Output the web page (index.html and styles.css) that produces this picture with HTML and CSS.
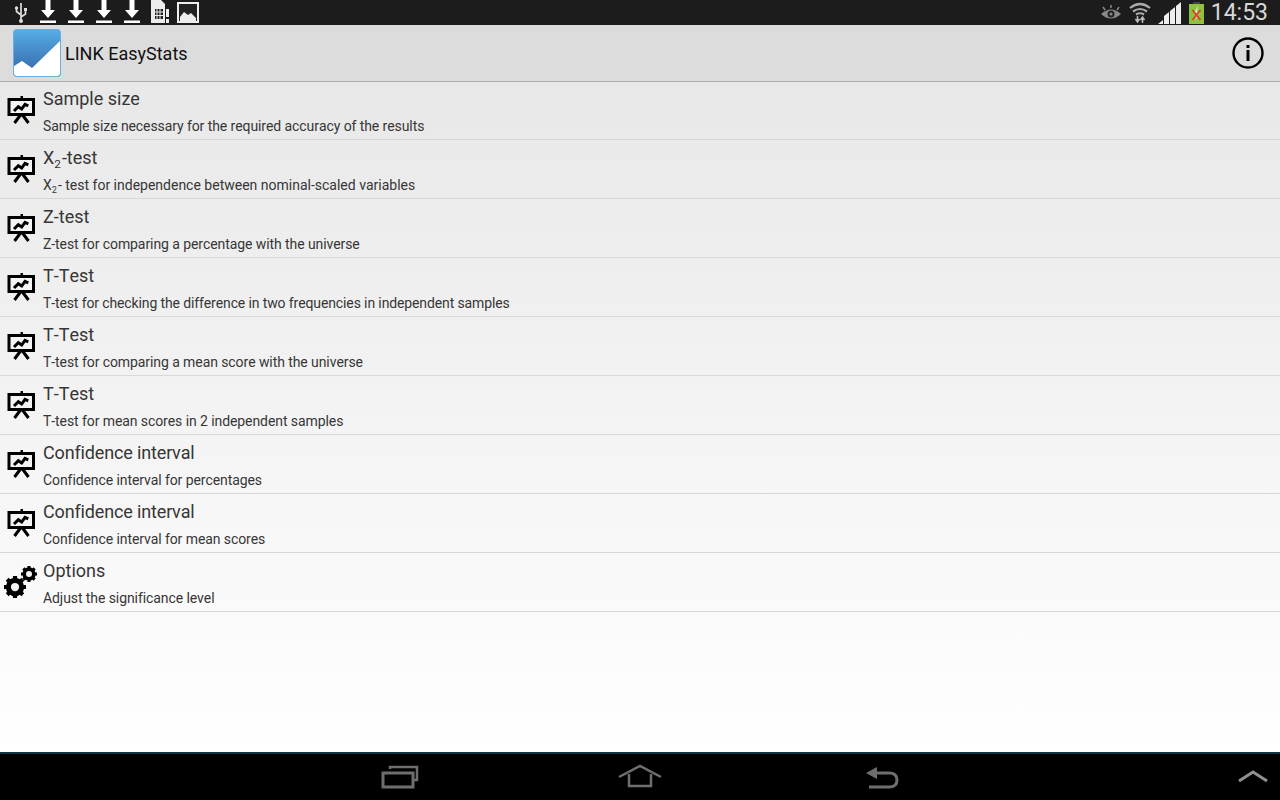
FILE: index.html
```html
<!DOCTYPE html>
<html lang="en">
<head>
    <meta charset="UTF-8">
    <title>LINK EasyStats</title>
    <link rel="stylesheet" href="styles.css">
</head>
<body>
    <svg class="defs" width="0" height="0">
        <symbol id="board" viewBox="0 0 30 30">
            <path d="M14.500 0h2.500v2.500h-2.500z" fill="#000"/>
            <rect x="3" y="3.500" width="24.500" height="15" fill="#f4f4f4" stroke="#000" stroke-width="3"/>
            <path d="M8 15l4.300-4.300 3.400 2.300L19 8.300l3.300 1.500" fill="none" stroke="#000" stroke-width="3"/>
            <path d="M14.500 19l-6 8M16.500 19l6 8" fill="none" stroke="#000" stroke-width="3"/>
        </symbol>
        <symbol id="dl" viewBox="0 0 16 23">
            <path d="M5.500 0h5v10h4.500l-7 8-7-8h4.500z" fill="#fff"/>
            <rect y="20.500" width="16" height="2.500" fill="#fff"/>
        </symbol>
        <symbol id="gear" viewBox="0 0 24 24">
            <circle cx="12" cy="12" r="7" fill="none" stroke="#000" stroke-width="6"/>
            <path d="M12 0v24M0 12h24M3.500 3.500l17 17M20.500 3.500l-17 17" stroke="#000" stroke-width="4.500"/>
            <circle cx="12" cy="12" r="4.500" fill="#f4f4f4"/>
        </symbol>
    </svg>

    <div class="statusbar">
        <div class="status-left">
            <svg class="usb" width="14" height="22" viewBox="0 0 14 22">
                <path d="M7 1v18M7 13L2.500 9.500V6M7 15l4.500-3V8" fill="none" stroke="#ddd" stroke-width="1.700"/>
                <circle cx="7" cy="19" r="2" fill="#ddd"/>
                <circle cx="2.500" cy="6" r="1.700" fill="#ddd"/>
                <rect x="10" y="6" width="3" height="3" fill="#ddd"/>
            </svg>
            <svg class="dl-icon"><use href="#dl"/></svg>
            <svg class="dl-icon"><use href="#dl"/></svg>
            <svg class="dl-icon"><use href="#dl"/></svg>
            <svg class="dl-icon"><use href="#dl"/></svg>
            <svg class="sim" width="18" height="23" viewBox="0 0 18 23">
                <path d="M0 0h10l4 4v19H0z" fill="#eee"/>
                <path d="M4 9h8v10H4z" fill="#222"/>
                <path d="M6 9v10M9 9v10M4 12h8M4 15.500h8" stroke="#eee"/>
                <rect x="15" y="9" width="3" height="8" fill="#eee"/>
                <rect x="15" y="19" width="3" height="4" fill="#eee"/>
            </svg>
            <svg class="pic" width="22" height="21" viewBox="0 0 22 21">
                <rect x="1" y="1" width="20" height="19" fill="#222" stroke="#eee" stroke-width="2"/>
                <path d="M3 15l4-5 4 3 3-2 5 5v3H3z" fill="#eee"/>
            </svg>
        </div>
        <div class="status-right">
            <svg width="22" height="18" viewBox="0 0 22 18">
                <path d="M1 10q10-9 20 0q-10 9-20 0z" fill="#888"/>
                <circle cx="11" cy="10" r="3.500" fill="#222"/>
                <circle cx="11" cy="10" r="1.500" fill="#888"/>
                <path d="M11 1v3M3 3l2 3M19 3l-2 3" stroke="#888" stroke-width="1.500"/>
            </svg>
            <svg width="22" height="22" viewBox="0 0 22 22">
                <path d="M1 6q10-8 20 0M4 9.500q7-5 14 0M7 12.500q4-2.500 8 0" fill="none" stroke="#aaa" stroke-width="2.200"/>
                <path d="M8.500 14v6M6.500 17l2 3 2-3M13.500 21v-6M11.500 18l2-3 2 3" fill="none" stroke="#bbb" stroke-width="1.500"/>
            </svg>
            <svg class="signal" width="24" height="22" viewBox="0 0 24 22">
                <path d="M0 22l5-4v4zM6 22v-8l5-4v12zM12 22V9l5-4v17zM18 22V4l5-4v22z" fill="#eee"/>
            </svg>
            <svg class="battery" width="15" height="22" viewBox="0 0 15 22">
                <rect x="4" y="0" width="7" height="2" fill="#444"/>
                <rect y="2" width="15" height="20" fill="#8cc23c"/>
                <path d="M9 4L5 11h3l-2 8 5-9H8z" fill="#dfeec8"/>
                <path d="M3.500 8l8 10M11.500 8l-8 10" stroke="#d8452a" stroke-width="2"/>
            </svg>
            <span class="clock">14:53</span>
        </div>
    </div>

    <header class="actionbar">
        <div class="brand">
            <svg class="logo" width="48" height="48" viewBox="0 0 48 48">
                <defs>
                    <linearGradient id="logoFill" x1="0" y1="0" x2="0" y2="1">
                        <stop offset="0" stop-color="#56ade4"/>
                        <stop offset="1" stop-color="#3464a8"/>
                    </linearGradient>
                </defs>
                <rect x="0.500" y="0.500" width="47" height="47" rx="3" fill="url(#logoFill)" stroke="#6aaee0"/>
                <path d="M1 37l8-5 10 7L47 12v32a3 3 0 0 1-3 3H4a3 3 0 0 1-3-3z" fill="#fff"/>
            </svg>
            <span class="brand-name">LINK EasyStats</span>
        </div>
        <svg class="info" width="32" height="32" viewBox="0 0 32 32">
            <circle cx="16" cy="16" r="14.500" fill="none" stroke="#000" stroke-width="2.400"/>
            <rect x="14.500" y="13" width="3" height="11" fill="#000"/>
            <rect x="14.500" y="8" width="3" height="3" fill="#000"/>
        </svg>
    </header>

    <main class="list">
        <div class="row">
            <svg class="row-icon"><use href="#board"/></svg>
            <div class="row-text">
                <div class="row-title">Sample size</div>
                <div class="row-desc">Sample size necessary for the required accuracy of the results</div>
            </div>
        </div>
        <div class="row">
            <svg class="row-icon"><use href="#board"/></svg>
            <div class="row-text">
                <div class="row-title">X<sub>2</sub>-test</div>
                <div class="row-desc wide">X<sub>2</sub>- test for independence between nominal-scaled variables</div>
            </div>
        </div>
        <div class="row">
            <svg class="row-icon"><use href="#board"/></svg>
            <div class="row-text">
                <div class="row-title">Z-test</div>
                <div class="row-desc">Z-test for comparing a percentage with the universe</div>
            </div>
        </div>
        <div class="row">
            <svg class="row-icon"><use href="#board"/></svg>
            <div class="row-text">
                <div class="row-title">T-Test</div>
                <div class="row-desc tight">T-test for checking the difference in two frequencies in independent samples</div>
            </div>
        </div>
        <div class="row">
            <svg class="row-icon"><use href="#board"/></svg>
            <div class="row-text">
                <div class="row-title">T-Test</div>
                <div class="row-desc">T-test for comparing a mean score with the universe</div>
            </div>
        </div>
        <div class="row">
            <svg class="row-icon"><use href="#board"/></svg>
            <div class="row-text">
                <div class="row-title">T-Test</div>
                <div class="row-desc">T-test for mean scores in 2 independent samples</div>
            </div>
        </div>
        <div class="row">
            <svg class="row-icon"><use href="#board"/></svg>
            <div class="row-text">
                <div class="row-title tight">Confidence interval</div>
                <div class="row-desc">Confidence interval for percentages</div>
            </div>
        </div>
        <div class="row">
            <svg class="row-icon"><use href="#board"/></svg>
            <div class="row-text">
                <div class="row-title tight">Confidence interval</div>
                <div class="row-desc">Confidence interval for mean scores</div>
            </div>
        </div>
        <div class="row">
            <svg class="row-icon gears" viewBox="0 0 34 34">
                <use href="#gear" x="0" y="11" width="22" height="22"/>
                <use href="#gear" x="17" y="1" width="16" height="16"/>
            </svg>
            <div class="row-text">
                <div class="row-title">Options</div>
                <div class="row-desc">Adjust the significance level</div>
            </div>
        </div>
    </main>

    <nav class="navbar">
        <svg class="nav-recent" width="38" height="24" viewBox="0 0 38 24">
            <path d="M9 4V2h27v13h-3" fill="none" stroke="#6e6e6e" stroke-width="2.500"/>
            <rect x="2" y="8" width="30" height="14" fill="none" stroke="#6e6e6e" stroke-width="3"/>
        </svg>
        <svg class="nav-home" width="44" height="24" viewBox="0 0 44 24">
            <path d="M1 13L22 2l21 11" fill="none" stroke="#6e6e6e" stroke-width="2.500"/>
            <path d="M11 10v12h22V10" fill="none" stroke="#6e6e6e" stroke-width="2.500"/>
        </svg>
        <svg class="nav-back" width="34" height="24" viewBox="0 0 34 24">
            <path d="M1 7l11-6v12z" fill="#6e6e6e"/>
            <path d="M10 7h14q8 0 8 7t-8 7H4" fill="none" stroke="#6e6e6e" stroke-width="3"/>
        </svg>
        <svg class="nav-up" width="32" height="16" viewBox="0 0 32 16">
            <path d="M2 12L16 3l14 9" fill="none" stroke="#909090" stroke-width="3"/>
        </svg>
    </nav>
</body>
</html>
```

FILE: styles.css
```css
* {
    box-sizing: border-box;
}

body {
    margin: 0;
    width: 1280px;
    height: 800px;
    display: flex;
    flex-direction: column;
    overflow: hidden;
    font-family: Roboto, sans-serif;
    background-color: #fff;
}

.defs {
    position: absolute;
}

/* Status bar */
.statusbar {
    height: 25px;
    flex-shrink: 0;
    background-color: #1c1c1c;
    display: flex;
    justify-content: space-between;
    align-items: center;
    padding: 0 12px 0 14px;
}

.status-left {
    display: flex;
    align-items: flex-start;
    height: 25px;
}

.usb {
    margin: 2px 12px 0 0;
}

.dl-icon {
    width: 16px;
    height: 23px;
    margin-right: 12px;
}

.sim {
    margin-right: 8px;
    margin-left: -1px;
}

.pic {
    margin-top: 2px;
}

.status-right {
    display: flex;
    align-items: center;
    gap: 7px;
}

.clock {
    font-size: 23px;
    color: #d8d8d8;
    line-height: 25px;
}

/* Action bar */
.actionbar {
    height: 57px;
    flex-shrink: 0;
    background-color: #dcdcdc;
    border-bottom: 1px solid #adadad;
    display: flex;
    justify-content: space-between;
    align-items: center;
    padding: 0 16px 0 13px;
}

.brand {
    display: flex;
    align-items: center;
    gap: 4px;
}

.brand-name {
    font-size: 18px;
    color: #111;
}

/* List */
.list {
    flex: 1;
    background: linear-gradient(#e8e8e8, #ffffff);
}

.row {
    height: 59px;
    display: flex;
    align-items: center;
    border-bottom: 1px solid #d8d8d8;
}

.row:first-child {
    height: 58px;
}

.row-icon {
    width: 30px;
    height: 30px;
    margin: 2px 7px 0 6px;
    flex-shrink: 0;
}

.row:first-child .row-icon {
    margin-top: 1px;
}

.row-icon.gears {
    width: 34px;
    height: 34px;
    margin: 0 5px 0 4px;
}

.row-text {
    display: flex;
    flex-direction: column;
    gap: 6px;
    padding-top: 1px;
    font-kerning: none;
}

.row-title {
    font-size: 18px;
    line-height: 24px;
    color: #363636;
}

.row-title.tight {
    letter-spacing: -0.15px;
}

.row-desc {
    font-size: 14px;
    line-height: 18px;
    letter-spacing: -0.08px;
    color: #363636;
}

.row-desc.wide {
    letter-spacing: 0;
}

.row-desc.tight {
    letter-spacing: -0.12px;
}

sub {
    font-size: 0.65em;
    line-height: 0;
    margin-right: 1px;
}

/* Nav bar */
.navbar {
    height: 48px;
    flex-shrink: 0;
    position: relative;
    background-color: #000;
    border-top: 2px solid #123342;
}

.navbar svg {
    position: absolute;
}

.nav-recent {
    left: 381px;
    top: 11px;
}

.nav-home {
    left: 618px;
    top: 10px;
}

.nav-back {
    left: 865px;
    top: 12px;
}

.nav-up {
    left: 1237px;
    top: 15px;
}
```
